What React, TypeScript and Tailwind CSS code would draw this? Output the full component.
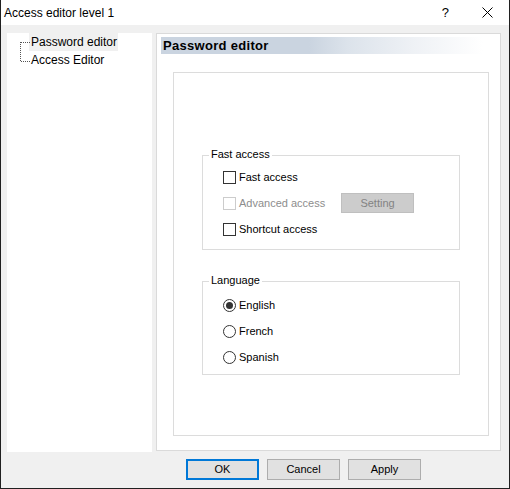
import React from "react";

const font = { fontFamily: '"Liberation Sans", Arial, sans-serif' };

function Check({ label, disabled }: { label: string; disabled?: boolean }) {
  return (
    <div className="flex items-center">
      <span
        className={`w-[13px] h-[13px] border bg-white ${disabled ? "border-[#cccccc]" : "border-[#333333]"}`}
      />
      <span className={`ml-[3px] text-[11px] leading-[13px] ${disabled ? "text-[#8d8d8d]" : "text-black"}`}>
        {label}
      </span>
    </div>
  );
}

function Radio({ label, checked }: { label: string; checked?: boolean }) {
  return (
    <div className="flex items-center h-[26px]">
      <span className="w-[13px] h-[13px] rounded-full border border-[#333333] bg-white flex items-center justify-center">
        {checked && <span className="w-[7px] h-[7px] rounded-full bg-[#333333]" />}
      </span>
      <span className="ml-[3px] text-[11px] leading-[13px] text-black">{label}</span>
    </div>
  );
}

function Group({ title, children, className }: { title: string; children: React.ReactNode; className?: string }) {
  return (
    <div className={`relative border border-[#dcdcdc] w-[258px] ml-[28px] ${className ?? ""}`}>
      <span className="absolute -top-[8px] left-[6px] px-[2px] bg-white text-[11px] leading-[13px] text-black">
        {title}
      </span>
      {children}
    </div>
  );
}

function Btn({ label, primary }: { label: string; primary?: boolean }) {
  return (
    <div
      className={`w-[73px] h-[21px] bg-[#e1e1e1] flex items-center justify-center text-[11px] text-black ${
        primary ? "border-2 border-[#0078d7]" : "border border-[#adadad]"
      }`}
    >
      {label}
    </div>
  );
}

export default function App() {
  return (
    <div style={font} className="w-[510px] h-[489px] bg-[#f0f0f0] border-x border-b border-[#202020] flex flex-col overflow-hidden">
      {/* Title bar */}
      <div className="h-[25px] bg-white flex items-center shrink-0">
        <span className="ml-[3px] text-[12px] text-black">Access editor level 1</span>
        <span className="ml-auto mr-[33px] text-[13px] text-black">?</span>
        <svg width="11" height="11" viewBox="0 0 11 11" className="mr-[16px]">
          <path d="M0.5 0.5 L10.5 10.5 M10.5 0.5 L0.5 10.5" stroke="#000" strokeWidth="1" />
        </svg>
      </div>

      {/* Body */}
      <div className="flex items-start pt-[8px] pl-[6px] pr-[8px]">
        {/* Tree */}
        <div className="w-[145px] h-[419px] bg-white relative shrink-0">
          <svg width="12" height="30" className="absolute left-[13px] top-[9px]" viewBox="0 0 12 30" shapeRendering="crispEdges">
            <path d="M0.5 0 V20 M1 0.5 H10 M1 19.5 H10" stroke="#555555" strokeWidth="1" strokeDasharray="1 1" fill="none" />
          </svg>
          <div className="pl-[22px]">
            <div className="h-[18px] flex items-center">
              <span className="bg-[#f0f0f0] pl-[2px] pr-[1px] h-[18px] leading-[18px] text-[12px] text-black">
                Password editor
              </span>
            </div>
            <div className="h-[18px] flex items-center">
              <span className="pl-[2px] text-[12px] leading-[18px] text-black">Access Editor</span>
            </div>
          </div>
        </div>

        {/* Panel */}
        <div className="ml-[4px] w-[345px] h-[418px] bg-white border border-[#dadada]">
          <div className="ml-[4px] mt-[3px] w-[322px] h-[17px] flex items-center bg-[linear-gradient(to_right,#cad4e0_0%,#cad4e0_46%,#dce3eb_58%,#eef1f5_78%,#ffffff_100%)]">
            <span className="ml-[2px] text-[13px] font-bold tracking-[0.3px] text-black leading-[17px]">Password editor</span>
          </div>
          <div className="ml-[16px] mt-[18px] w-[316px] h-[364px] border border-[#dcdcdc] pt-[82px]">
            <Group title="Fast access">
              <div className="pt-[8px] pb-[7px] pl-[20px]">
                <div className="h-[26px] flex items-center">
                  <Check label="Fast access" />
                </div>
                <div className="h-[26px] flex items-center">
                  <div className="w-[118px]">
                    <Check label="Advanced access" disabled />
                  </div>
                  <div className="w-[73px] h-[20px] bg-[#cccccc] border border-[#bfbfbf] flex items-center justify-center text-[11px] text-[#838383]">
                    Setting
                  </div>
                </div>
                <div className="h-[26px] flex items-center">
                  <Check label="Shortcut access" />
                </div>
              </div>
            </Group>
            <Group title="Language" className="mt-[31px]">
              <div className="pt-[10px] pb-[4px] pl-[20px]">
                <Radio label="English" checked />
                <Radio label="French" />
                <Radio label="Spanish" />
              </div>
            </Group>
          </div>
        </div>
      </div>

      {/* Buttons */}
      <div className="flex gap-[8px] pl-[185px] mt-[7px]">
        <Btn label="OK" primary />
        <Btn label="Cancel" />
        <Btn label="Apply" />
      </div>
    </div>
  );
}
